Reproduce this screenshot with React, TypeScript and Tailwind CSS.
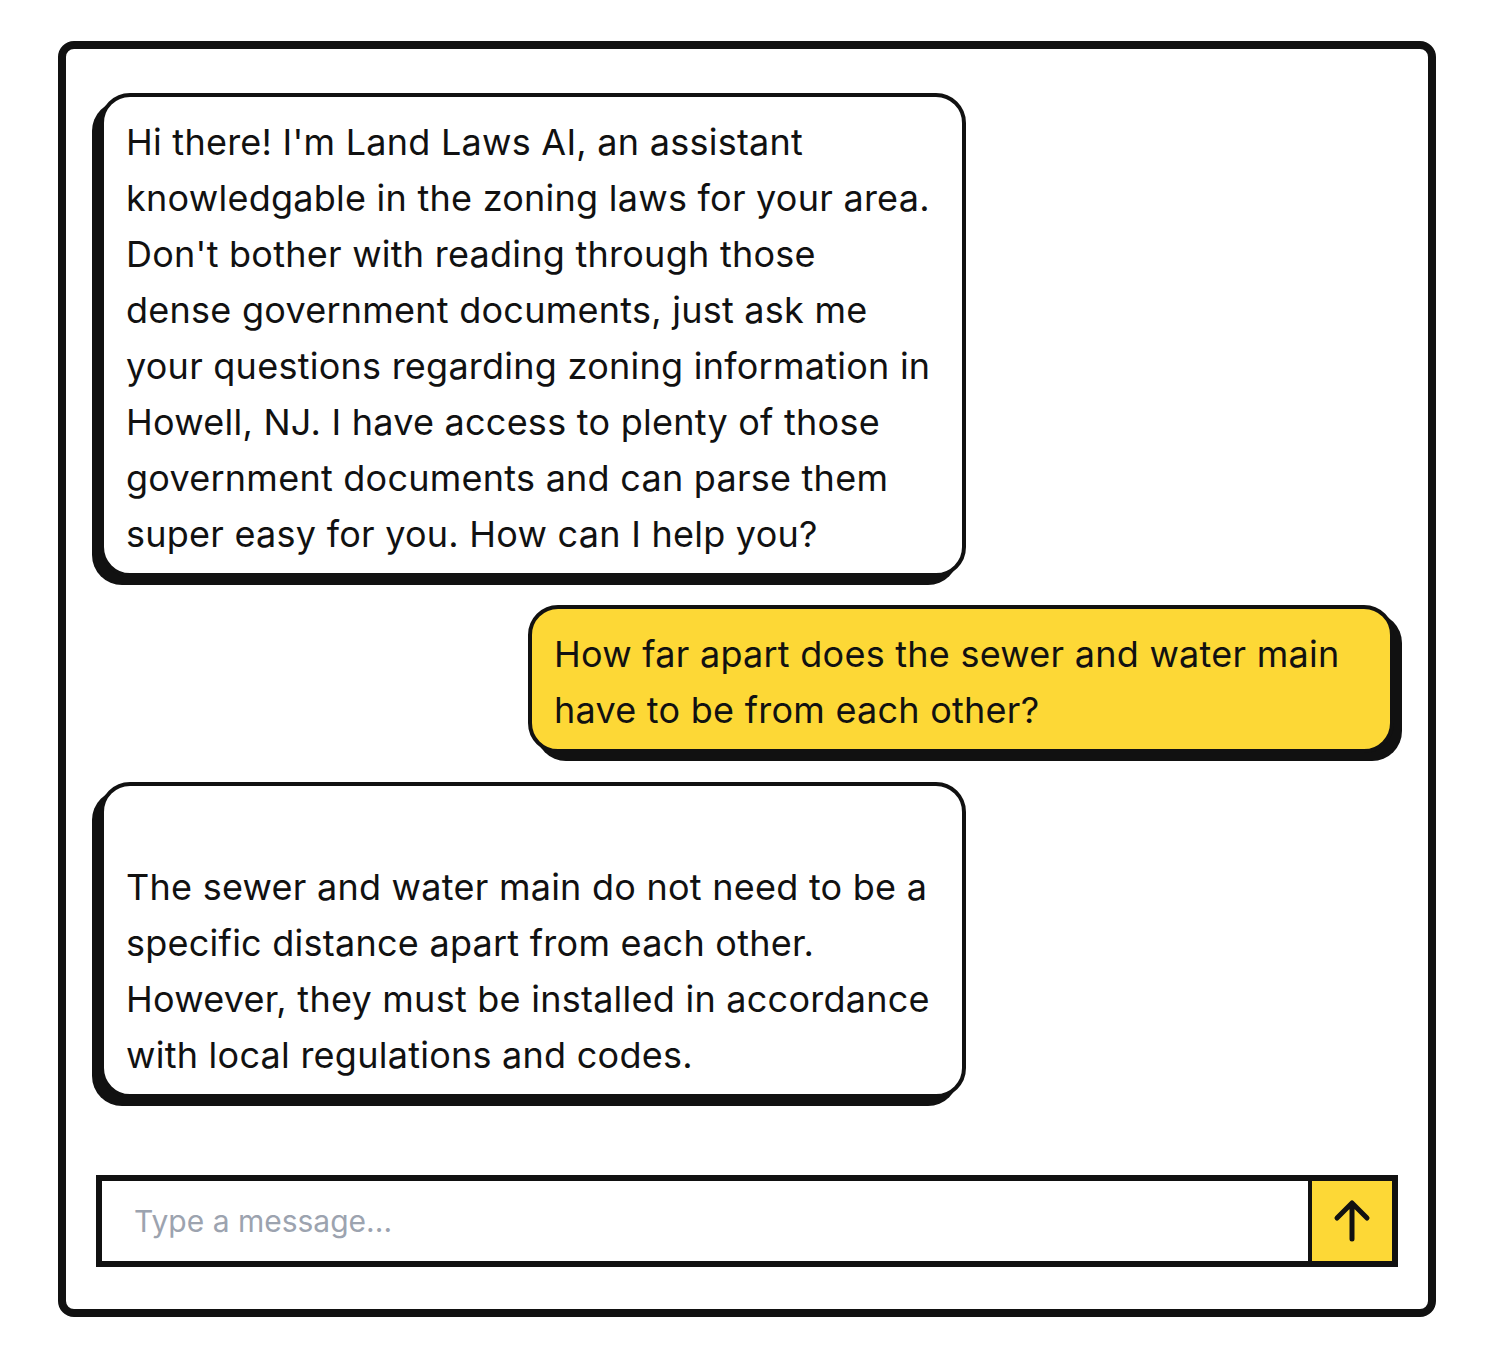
const botIntro = [
  "Hi there! I'm Land Laws AI, an assistant",
  "knowledgable in the zoning laws for your area.",
  "Don't bother with reading through those",
  "dense government documents, just ask me",
  "your questions regarding zoning information in",
  "Howell, NJ. I have access to plenty of those",
  "government documents and can parse them",
  "super easy for you. How can I help you?",
]

const question = [
  "How far apart does the sewer and water main",
  "have to be from each other?",
]

const answer = [
  "The sewer and water main do not need to be a",
  "specific distance apart from each other.",
  "However, they must be installed in accordance",
  "with local regulations and codes.",
]

const Lines = ({ lines }: { lines: string[] }) => {
  return (
    <p className="whitespace-nowrap">
      {lines.map((line, i) => (
        <span key={i}>
          {line}
          {i < lines.length - 1 && <br />}
        </span>
      ))}
    </p>
  )
}

const BotBubble = ({ children }: { children: React.ReactNode }) => {
  return (
    <div className="w-[866px] self-start rounded-[30px] border-4 border-[#111] bg-white pt-[17px] pb-[11px] pl-[22px] pr-6 shadow-[-8px_8px_0_#111]">
      {children}
    </div>
  )
}

const App = () => {
  return (
    <div className="min-h-screen bg-white pt-[41px] pl-[58px] font-['Inter','Liberation_Sans',sans-serif] text-[#111]">
      <div className="flex w-[1378px] flex-col rounded-[16px] border-8 border-[#111] bg-white">
        <div className="flex flex-col gap-[28px] px-[34px] pt-[44px] text-[36px] leading-[56px] tracking-[0.25px]">
          <BotBubble>
            <Lines lines={botIntro} />
          </BotBubble>

          <div className="w-[866px] self-end rounded-[30px] border-4 border-[#111] bg-[#fdd836] pt-[17px] pb-[11px] pl-[22px] pr-6 shadow-[8px_8px_0_#111]">
            <Lines lines={question} />
          </div>

          <div className="mt-px">
            <BotBubble>
              <p>&nbsp;</p>
              <Lines lines={answer} />
            </BotBubble>
          </div>
        </div>

        <div className="mt-[77px] px-[30px] pb-[42px]">
          <div className="flex h-[92px] border-[6px] border-[#111]">
            <input
              type="text"
              placeholder="Type a message..."
              className="min-w-0 flex-1 bg-white px-8 text-[30px] text-[#111] outline-none placeholder:text-[#9ca3af]"
            />
            <button className="flex w-[84px] items-center justify-center border-l-4 border-[#111] bg-[#fdd836]">
              <svg
                width="48"
                height="48"
                viewBox="0 0 24 24"
                fill="none"
                stroke="#111"
                strokeWidth="2.5"
                strokeLinecap="round"
                strokeLinejoin="round"
              >
                <path d="M4.5 10.5 12 3l7.5 7.5M12 3v18" />
              </svg>
            </button>
          </div>
        </div>
      </div>
    </div>
  )
}

export default App
